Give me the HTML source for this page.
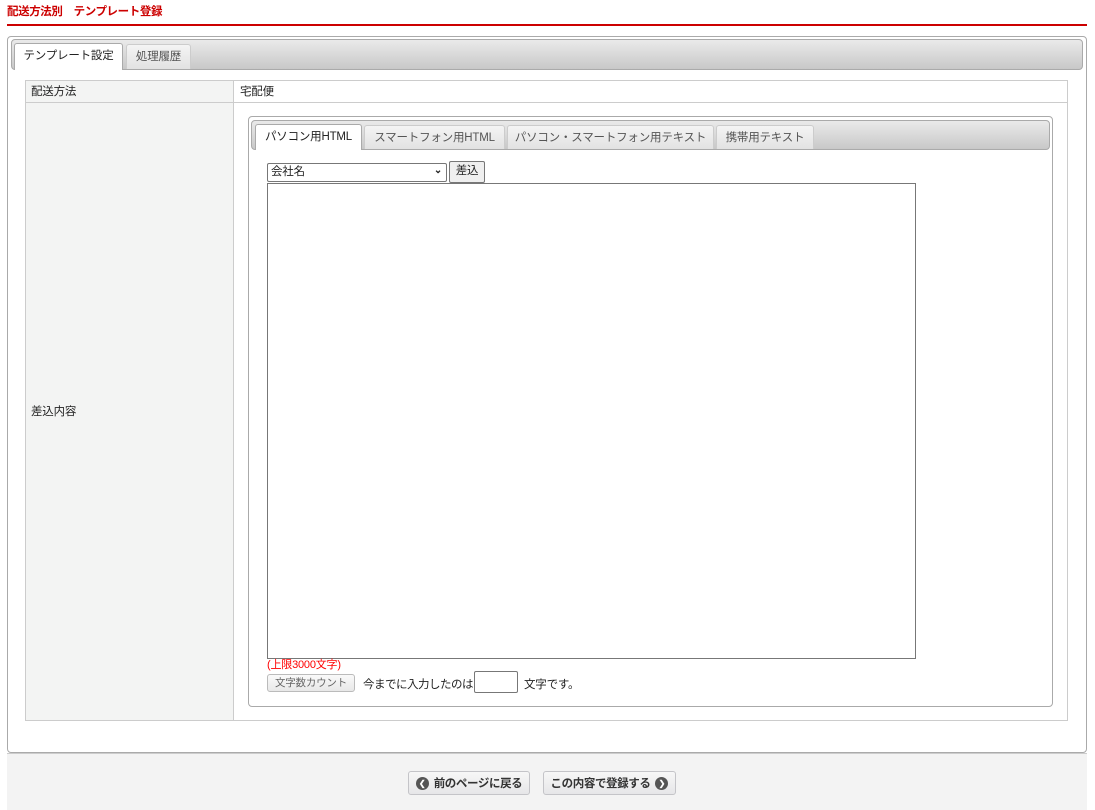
<!DOCTYPE html>
<html><head><meta charset="utf-8"><style>
*{box-sizing:border-box;margin:0;padding:0}
body{width:1095px;height:810px;background:#fff;font-family:"Liberation Sans","Noto Sans CJK JP",sans-serif;font-size:11.5px;letter-spacing:-0.2px;color:#222;position:relative;overflow:hidden}
.a{position:absolute}
.bar{background:linear-gradient(#eaeaea,#c8c8c8);border:1px solid #aaa;border-radius:4px}
.tab{position:absolute;background:linear-gradient(#f4f4f4,#e2e2e2);border:1px solid #ccc;border-bottom:none;border-radius:3px 3px 0 0;color:#555;text-align:center;line-height:24px;font-size:11.5px}
.tab.on{background:#fff;color:#222;border-color:#aaa}
.btn{position:absolute;border:1px solid #c4c4c8;border-radius:3px;background:linear-gradient(#f7f7f7,#e6e6e8);font-size:11.5px;font-weight:bold;color:#333;display:flex;align-items:center;justify-content:center;gap:5px;letter-spacing:-0.4px}
.ic{width:13px;height:13px;border-radius:50%;background:#555;color:#fff;font-size:8px;line-height:13px;text-align:center;letter-spacing:0}
</style></head><body>
<div class="a" style="left:7px;top:3px;color:#cc0000;font-weight:bold;font-size:11.5px;letter-spacing:-0.4px">配送方法別　テンプレート登録</div>
<div class="a" style="left:7px;top:24px;width:1080px;height:2px;background:#cc0000"></div>
<div class="a" style="left:7px;top:36px;width:1080px;height:717px;border:1px solid #aaa;border-radius:4px"></div>
<div class="a bar" style="left:11px;top:39px;width:1072px;height:31px"></div>
<div class="tab on" style="left:14px;top:43px;width:109px;height:27px">テンプレート設定</div>
<div class="tab" style="left:126px;top:44px;width:65px;height:25px">処理履歴</div>
<div class="a" style="left:25px;top:80px;width:1043px;height:641px;border:1px solid #ccc"></div>
<div class="a" style="left:26px;top:81px;width:208px;height:639px;background:#f3f4f3;border-right:1px solid #ccc"></div>
<div class="a" style="left:26px;top:102px;width:1041px;height:1px;background:#ccc"></div>
<div class="a" style="left:31px;top:83px">配送方法</div>
<div class="a" style="left:240px;top:83px">宅配便</div>
<div class="a" style="left:31px;top:403px">差込内容</div>
<div class="a" style="left:248px;top:116px;width:805px;height:591px;border:1px solid #aaa;border-radius:4px"></div>
<div class="a bar" style="left:251px;top:120px;width:799px;height:30px"></div>
<div class="tab on" style="left:255px;top:124px;width:107px;height:26px">パソコン用HTML</div>
<div class="tab" style="left:364px;top:125px;width:141px;height:24px">スマートフォン用HTML</div>
<div class="tab" style="left:507px;top:125px;width:207px;height:24px">パソコン・スマートフォン用テキスト</div>
<div class="tab" style="left:716px;top:125px;width:98px;height:24px">携帯用テキスト</div>
<div class="a" style="left:267px;top:163px;width:180px;height:19px;border:1px solid #777;border-radius:2px;padding-left:3px;line-height:16px">会社名<span style="position:absolute;right:4px;top:-1px;font-size:10px;font-weight:bold">&#8964;</span></div>
<div class="a" style="left:449px;top:161px;width:36px;height:22px;border:1px solid #777;border-radius:2px;background:#efefef;text-align:center;line-height:19px">差込</div>
<div class="a" style="left:267px;top:183px;width:649px;height:476px;border:1px solid #777"></div>
<div class="a" style="left:267px;top:656px;color:#ff0000;font-size:11px">(上限3000文字)</div>
<div class="a" style="left:267px;top:674px;width:88px;height:18px;border:1px solid #bbb;border-radius:3px;background:linear-gradient(#fafafa,#e8e8e8);color:#666;font-size:10.5px;text-align:center;line-height:16px">文字数カウント</div>
<div class="a" style="left:363px;top:676px;letter-spacing:-0.5px">今までに入力したのは</div>
<div class="a" style="left:474px;top:671px;width:44px;height:22px;border:1px solid #777;border-radius:2px"></div>
<div class="a" style="left:524px;top:676px">文字です。</div>
<div class="a" style="left:7px;top:753px;width:1080px;height:57px;background:#f3f3f3;border-top:1px solid #ccc"></div>
<div class="btn" style="left:408px;top:771px;width:122px;height:24px"><span class="ic">&#10094;</span>前のページに戻る</div>
<div class="btn" style="left:543px;top:771px;width:133px;height:24px">この内容で登録する<span class="ic">&#10095;</span></div>
</body></html>
